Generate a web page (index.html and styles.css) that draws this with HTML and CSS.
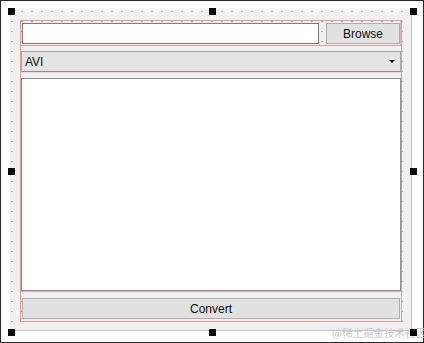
FILE: index.html
```html
<!DOCTYPE html>
<html lang="en">
<head>
  <meta charset="UTF-8">
  <title>Converter form</title>
  <link rel="stylesheet" href="styles.css">
</head>
<body>

  <div class="frame">
    <!-- the form being edited -->
    <div class="form">
      <div class="layout">
        <div class="row-file">
          <div class="line-edit"></div>
          <div class="btn browse">Browse</div>
        </div>
        <div class="spacer-a"></div>
        <div class="combo">
          <span>AVI</span>
          <span class="arrow"></span>
        </div>
        <div class="spacer-b"></div>
        <div class="text-edit"></div>
        <div class="row-convert">
          <div class="btn convert">Convert</div>
        </div>
      </div>
    </div>

    <div class="watermark">@稀土掘金技术社区</div>

    <!-- selection handles -->
    <div class="handle h-tl"></div>
    <div class="handle h-tc"></div>
    <div class="handle h-tr"></div>
    <div class="handle h-ml"></div>
    <div class="handle h-mr"></div>
    <div class="handle h-bl"></div>
    <div class="handle h-bc"></div>
    <div class="handle h-br"></div>
  </div>

</body>
</html>
```

FILE: styles.css
```css
body {
  margin: 0;
  background: #fff;
  font-family: "Liberation Sans", Arial, sans-serif;
  font-size: 12px;
  color: #111;
}
.frame {
  position: relative;
  width: 424px;
  height: 343px;
  box-sizing: border-box;
  border: 1px solid #2a2a2a;
  padding: 9px 0 0 9px;
  background: #fff;
}
.form {
  width: 402px;
  height: 321px;
  padding: 10px 0 0 10px;
  box-sizing: border-box;
  border-right: 1px solid #c4c4c4;
  border-bottom: 1px solid #c4c4c4;
  background-color: #f0f0f0;
  background-image: radial-gradient(circle at 2px 1.5px, #b0b0b0 0.7px, transparent 1px);
  background-size: 10px 10px;
}
.layout {
  width: 382px;
  height: 302px;
  box-sizing: border-box;
  border: 1px solid #e29a9a;
  display: flex;
  flex-direction: column;
}
.row-file {
  height: 25px;
  box-sizing: border-box;
  border-bottom: 1px solid #e29a9a;
  border-right: 1px solid #eab0b0;
  padding: 2px 0 0 1px;
  display: flex;
  gap: 7px;
}
.line-edit {
  width: 297px;
  height: 21px;
  box-sizing: border-box;
  border: 1px solid #7a7a7a;
  background: #fff;
}
.btn {
  height: 21px;
  box-sizing: border-box;
  border: 1px solid #adadad;
  background: #e1e1e1;
  display: flex;
  align-items: center;
  justify-content: center;
}
.browse {
  width: 74px;
}
.spacer-a {
  height: 5px;
}
.combo {
  height: 21px;
  box-sizing: border-box;
  border: 1px solid #a8a8a8;
  border-bottom-color: #8c8c8c;
  background: #e3e3e3;
  padding: 0 5px 0 3px;
  display: flex;
  align-items: center;
  justify-content: space-between;
}
.arrow {
  width: 0;
  height: 0;
  border-left: 3px solid transparent;
  border-right: 3px solid transparent;
  border-top: 3px solid #000;
}
.spacer-b {
  height: 6px;
  border-top: 1px solid #f2d4d4;
  box-sizing: border-box;
}
.text-edit {
  height: 213px;
  box-sizing: border-box;
  border: 1px solid #8e8e8e;
  background: #fff;
}
.row-convert {
  flex: 1;
  box-sizing: border-box;
  border-top: 1px solid #eab0b0;
  padding: 6px 1px 0 1px;
}
.convert {
  width: 100%;
}
.handle {
  position: absolute;
  width: 7px;
  height: 7px;
  background: #000;
}
.h-tl { left: 7px; top: 7px; }
.h-tc { left: 208px; top: 7px; }
.h-tr { left: 409px; top: 7px; }
.h-ml { left: 7px; top: 167px; }
.h-mr { left: 409px; top: 167px; }
.h-bl { left: 7px; top: 328px; }
.h-bc { left: 208px; top: 328px; }
.h-br { left: 409px; top: 328px; }
.watermark {
  position: absolute;
  left: 331px;
  top: 326px;
  line-height: 12px;
  font-family: "Noto Sans CJK SC", sans-serif;
  font-size: 10.5px;
  color: #c9c9c9;
  white-space: nowrap;
}
```
